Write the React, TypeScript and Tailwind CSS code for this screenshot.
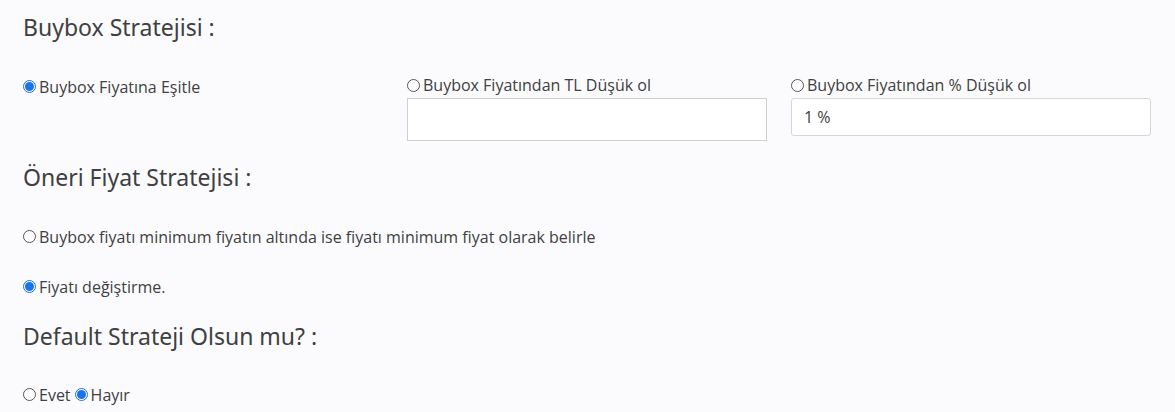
import type { ReactNode } from "react";

function Radio({ checked = false, label }: { checked?: boolean; label: string }) {
  return (
    <label className="inline-flex items-center gap-[3px]">
      <span
        className={
          checked
            ? "flex h-[13px] w-[13px] items-center justify-center rounded-full border border-[#1a73e8] bg-white"
            : "h-[13px] w-[13px] rounded-full border border-[#555] bg-white"
        }
      >
        {checked && <span className="h-[9px] w-[9px] rounded-full bg-[#1a73e8]" />}
      </span>
      <span>{label}</span>
    </label>
  );
}

function Heading({ children }: { children: ReactNode }) {
  return (
    <h2 className="font-[Noto_Sans,sans-serif] text-[23px] leading-[28px] text-[#404040]">
      {children}
    </h2>
  );
}

export default function App() {
  return (
    <div className="min-h-[412px] bg-[#fbfbfe] pl-[23px] font-[Open_Sans,sans-serif] text-[16px] text-[#404040]">
      <div className="pt-[13px]">
        <Heading>Buybox Stratejisi :</Heading>
      </div>

      <div className="mt-[33px] grid grid-cols-[384px_384px_384px]">
        <div className="leading-[22px]">
          <Radio checked label="Buybox Fiyatına Eşitle" />
        </div>
        <div className="leading-[22px]">
          <Radio label="Buybox Fiyatından TL Düşük ol" />
          <input
            type="text"
            className="mt-[1px] block h-[43px] w-[360px] border border-[#cfcfcf] bg-white px-3"
          />
        </div>
        <div className="leading-[22px]">
          <Radio label="Buybox Fiyatından % Düşük ol" />
          <input
            type="text"
            defaultValue="1 %"
            className="mt-[1px] block h-[38px] w-[360px] rounded-[3px] border border-[#d6d6d6] bg-white px-[12px] text-[#404040]"
          />
        </div>
      </div>

      <div className="mt-[22px]">
        <Heading>Öneri Fiyat Stratejisi :</Heading>
      </div>

      <div className="mt-[35px] leading-[22px]">
        <Radio label="Buybox fiyatı minimum fiyatın altında ise fiyatı minimum fiyat olarak belirle" />
      </div>
      <div className="mt-[26px] leading-[22px]">
        <Radio checked label="Fiyatı değiştirme." />
      </div>

      <div className="mt-[24px]">
        <Heading>Default Strateji Olsun mu? :</Heading>
      </div>

      <div className="mt-[34px] flex gap-[4px] leading-[22px]">
        <Radio label="Evet" />
        <Radio checked label="Hayır" />
      </div>
    </div>
  );
}
